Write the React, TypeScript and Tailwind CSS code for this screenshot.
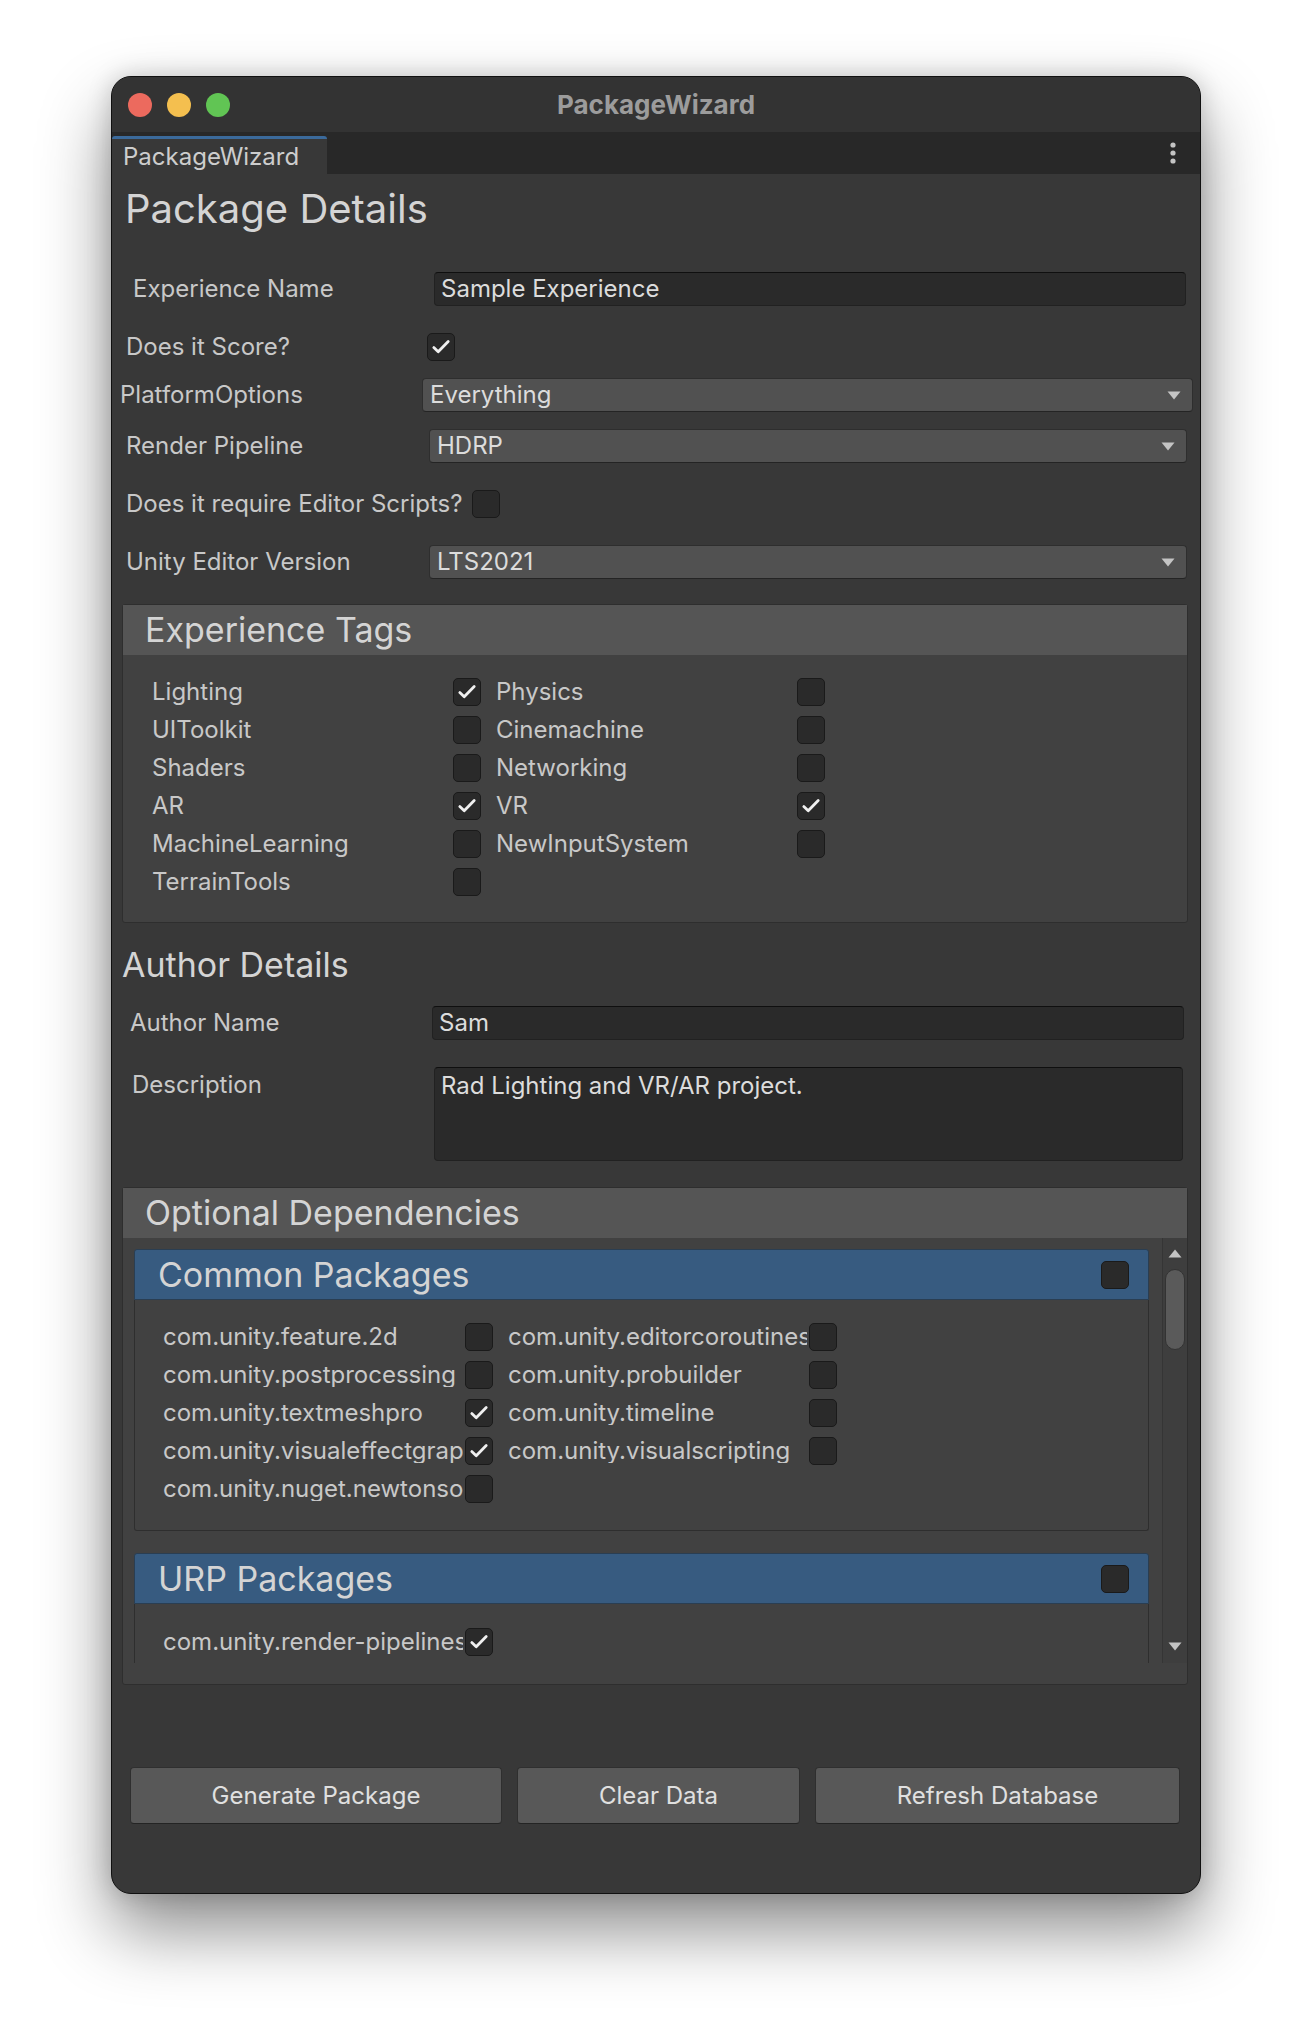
import React from "react";

const Check = ({ on = false, className = "" }: { on?: boolean; className?: string }) => (
  <div
    className={`w-[28px] h-[28px] shrink-0 rounded-[5px] bg-[#2a2a2a] border border-[#1a1a1a] flex items-center justify-center ${className}`}
  >
    {on && (
      <svg width="26" height="26" viewBox="0 0 26 26">
        <path d="M5.8 13.6 L10.2 17.8 L20.2 7.6" stroke="#f0f0f0" strokeWidth="2.8" fill="none" strokeLinecap="round" strokeLinejoin="round" />
      </svg>
    )}
  </div>
);

const Arrow = () => (
  <svg width="14" height="9" viewBox="0 0 14 9" className="shrink-0">
    <path d="M0.5 0.5 H13.5 L7 8.5 Z" fill="#c4c4c4" />
  </svg>
);

const Dropdown = ({ value, className = "" }: { value: string; className?: string }) => (
  <div
    className={`h-[34px] rounded-[4px] bg-[#515151] border border-[#2e2e2e] border-b-[#242424] flex items-center justify-between pl-[7px] pr-[11px] ${className}`}
  >
    <span className="text-[24px] text-[#dcdcdc] leading-none">{value}</span>
    <Arrow />
  </div>
);

const TextField = ({ value, className = "" }: { value: string; className?: string }) => (
  <div
    className={`h-[34px] rounded-[4px] bg-[#2a2a2a] border border-[#212121] border-t-[#0f0f0f] flex items-center px-[6px] ${className}`}
  >
    <span className="text-[24px] text-[#dcdcdc] leading-none">{value}</span>
  </div>
);

const tags: [string, boolean, string, boolean][] = [
  ["Lighting", true, "Physics", false],
  ["UIToolkit", false, "Cinemachine", false],
  ["Shaders", false, "Networking", false],
  ["AR", true, "VR", true],
  ["MachineLearning", false, "NewInputSystem", false],
];

const common: [string, boolean, string | null, boolean][] = [
  ["com.unity.feature.2d", false, "com.unity.editorcoroutines", false],
  ["com.unity.postprocessing", false, "com.unity.probuilder", false],
  ["com.unity.textmeshpro", true, "com.unity.timeline", false],
  ["com.unity.visualeffectgraph", true, "com.unity.visualscripting", false],
  ["com.unity.nuget.newtonsoft-json", false, null, false],
];

export default function App() {
  return (
    <div className="w-[1312px] h-[2042px] bg-white pt-[76px] font-['Inter','Noto_Sans',sans-serif]">
      <div className="mx-auto w-[1090px] h-[1818px] rounded-[20px] border border-[#101010] bg-[#383838] overflow-hidden shadow-[0_36px_70px_rgba(0,0,0,0.45),0_0_24px_rgba(0,0,0,0.18)] flex flex-col">
        {/* Title bar */}
        <div className="h-[55px] shrink-0 bg-[#333333] grid grid-cols-[1fr_auto_1fr] items-center">
          <div className="flex items-center gap-[15px] pl-[16px]">
            <div className="w-[24px] h-[24px] rounded-full bg-[#ec6a5e]" />
            <div className="w-[24px] h-[24px] rounded-full bg-[#f4bf4f]" />
            <div className="w-[24px] h-[24px] rounded-full bg-[#61c554]" />
          </div>
          <div className="text-[26px] font-bold text-[#9c9c9c] leading-none">PackageWizard</div>
          <div />
        </div>
        {/* Tab bar */}
        <div className="h-[42px] shrink-0 bg-[#282828] flex items-stretch justify-between">
          <div className="mt-[4px] w-[215px] bg-[#383838] border-t-[3px] border-[#3b6a9b] rounded-t-[3px] flex items-center pl-[11px]">
            <span className="text-[24px] text-[#cdcdcd] leading-none">PackageWizard</span>
          </div>
          <div className="flex items-center pr-[24px]">
            <svg width="6" height="22" viewBox="0 0 6 22">
              <circle cx="3" cy="3" r="2.6" fill="#c4c4c4" />
              <circle cx="3" cy="11" r="2.6" fill="#c4c4c4" />
              <circle cx="3" cy="19" r="2.6" fill="#c4c4c4" />
            </svg>
          </div>
        </div>

        {/* Content */}
        <div className="flex flex-col text-[#c8c8c8] text-[24px]">
          <div className="h-[70px] flex items-center pl-[13px] text-[40px] text-[#d4d4d4] leading-none">Package Details</div>

          <div className="mt-[28px] h-[34px] flex items-center pl-[21px]">
            <span className="w-[301px] leading-none">Experience Name</span>
            <TextField value="Sample Experience" className="w-[752px]" />
          </div>

          <div className="mt-[27px] h-[28px] flex items-center pl-[14px]">
            <span className="w-[301px] leading-none">Does it Score?</span>
            <Check on />
          </div>

          <div className="mt-[17px] h-[34px] flex items-center pl-[8px]">
            <span className="w-[302px] leading-none">PlatformOptions</span>
            <Dropdown value="Everything" className="w-[771px]" />
          </div>

          <div className="mt-[17px] h-[34px] flex items-center pl-[14px]">
            <span className="w-[303px] leading-none">Render Pipeline</span>
            <Dropdown value="HDRP" className="w-[758px]" />
          </div>

          <div className="mt-[27px] h-[27px] flex items-center pl-[14px] gap-[9px]">
            <span className="leading-none">Does it require Editor Scripts?</span>
            <Check />
          </div>

          <div className="mt-[28px] h-[34px] flex items-center pl-[14px]">
            <span className="w-[303px] leading-none">Unity Editor Version</span>
            <Dropdown value="LTS2021" className="w-[758px]" />
          </div>

          {/* Experience Tags */}
          <div className="mt-[25px] ml-[10px] w-[1066px] rounded-[3px] border border-[#2e2e2e] bg-[#414141]">
            <div className="h-[50px] bg-[#555555] flex items-center pl-[22px] text-[34px] text-[#d4d4d4] leading-none">Experience Tags</div>
            <div className="pt-[18px] pb-[21px] pl-[29px]">
              {tags.map(([a, av, b, bv]) => (
                <div key={a} className="h-[38px] flex items-center">
                  <span className="w-[301px] leading-none">{a}</span>
                  <Check on={av} />
                  <span className="ml-[15px] w-[301px] leading-none">{b}</span>
                  <Check on={bv} />
                </div>
              ))}
              <div className="h-[38px] flex items-center">
                <span className="w-[301px] leading-none">TerrainTools</span>
                <Check />
              </div>
            </div>
          </div>

          {/* Author details */}
          <div className="mt-[10px] h-[64px] flex items-center pl-[10px] text-[34px] text-[#d4d4d4] leading-none">Author Details</div>

          <div className="mt-[9px] h-[34px] flex items-center pl-[18px]">
            <span className="w-[302px] leading-none">Author Name</span>
            <TextField value="Sam" className="w-[752px]" />
          </div>

          <div className="mt-[27px] flex items-start pl-[20px]">
            <span className="w-[302px] h-[36px] flex items-center leading-none">Description</span>
            <div className="w-[749px] h-[94px] rounded-[4px] bg-[#2a2a2a] border border-[#212121] border-t-[#0f0f0f] px-[6px]">
              <div className="h-[36px] flex items-center text-[#dcdcdc] leading-none">Rad Lighting and VR/AR project.</div>
            </div>
          </div>

          {/* Optional Dependencies */}
          <div className="mt-[26px] ml-[10px] w-[1066px] rounded-[3px] border border-[#2e2e2e] bg-[#414141]">
            <div className="h-[50px] bg-[#555555] flex items-center pl-[22px] text-[34px] text-[#d4d4d4] leading-none">Optional Dependencies</div>
            <div className="flex h-[425px]">
              <div className="flex-1 overflow-hidden pl-[11px] pt-[11px]">
                {/* Common Packages */}
                <div className="w-[1015px]">
                  <div className="h-[51px] bg-[#375b80] border border-[#2a3e52] rounded-t-[3px] flex items-center justify-between pl-[23px] pr-[19px]">
                    <span className="text-[34px] text-[#d4d4d4] leading-none">Common Packages</span>
                    <Check />
                  </div>
                  <div className="border border-t-0 border-[#2e2e2e] rounded-b-[3px] pt-[18px] pb-[22px] pl-[28px]">
                    {common.map(([a, av, b, bv]) => (
                      <div key={a} className="h-[38px] flex items-center">
                        <span className="w-[300px] overflow-hidden whitespace-nowrap leading-none">{a}</span>
                        <Check on={av} className="ml-[2px]" />
                        {b !== null && (
                          <>
                            <span className="ml-[15px] w-[299px] overflow-hidden whitespace-nowrap leading-none">{b}</span>
                            <Check on={bv} className="ml-[2px]" />
                          </>
                        )}
                      </div>
                    ))}
                  </div>
                </div>
                {/* URP Packages */}
                <div className="w-[1015px] mt-[22px]">
                  <div className="h-[51px] bg-[#375b80] border border-[#2a3e52] rounded-t-[3px] flex items-center justify-between pl-[23px] pr-[19px]">
                    <span className="text-[34px] text-[#d4d4d4] leading-none">URP Packages</span>
                    <Check />
                  </div>
                  <div className="border border-t-0 border-[#2e2e2e] pt-[19px] pb-[22px] pl-[28px]">
                    <div className="h-[38px] flex items-center">
                      <span className="w-[300px] overflow-hidden whitespace-nowrap leading-none">com.unity.render-pipelines.universal</span>
                      <Check on className="ml-[2px]" />
                    </div>
                  </div>
                </div>
              </div>
              {/* Scrollbar */}
              <div className="w-[25px] shrink-0 bg-[#3e3e3e] border-l border-[#353535] flex flex-col items-center pt-[11px] pb-[12px]">
                <svg width="14" height="9" viewBox="0 0 14 9">
                  <path d="M0.5 8.5 H13.5 L7 0.5 Z" fill="#c4c4c4" />
                </svg>
                <div className="mt-[11px] w-[20px] h-[81px] rounded-full bg-[#5a5a5a] border border-[#333333]" />
                <div className="flex-1" />
                <svg width="14" height="9" viewBox="0 0 14 9">
                  <path d="M0.5 0.5 H13.5 L7 8.5 Z" fill="#c4c4c4" />
                </svg>
              </div>
            </div>
            <div className="h-[21px]" />
          </div>

          {/* Buttons */}
          <div className="mt-[82px] flex pl-[18px] gap-[15px]">
            <div className="w-[372px] h-[57px] rounded-[4px] bg-[#585858] border border-[#2f2f2f] border-b-[#242424] flex items-center justify-center text-[#e0e0e0] leading-none">Generate Package</div>
            <div className="w-[283px] h-[57px] rounded-[4px] bg-[#585858] border border-[#2f2f2f] border-b-[#242424] flex items-center justify-center text-[#e0e0e0] leading-none">Clear Data</div>
            <div className="w-[365px] h-[57px] rounded-[4px] bg-[#585858] border border-[#2f2f2f] border-b-[#242424] flex items-center justify-center text-[#e0e0e0] leading-none">Refresh Database</div>
          </div>
        </div>
      </div>
    </div>
  );
}
